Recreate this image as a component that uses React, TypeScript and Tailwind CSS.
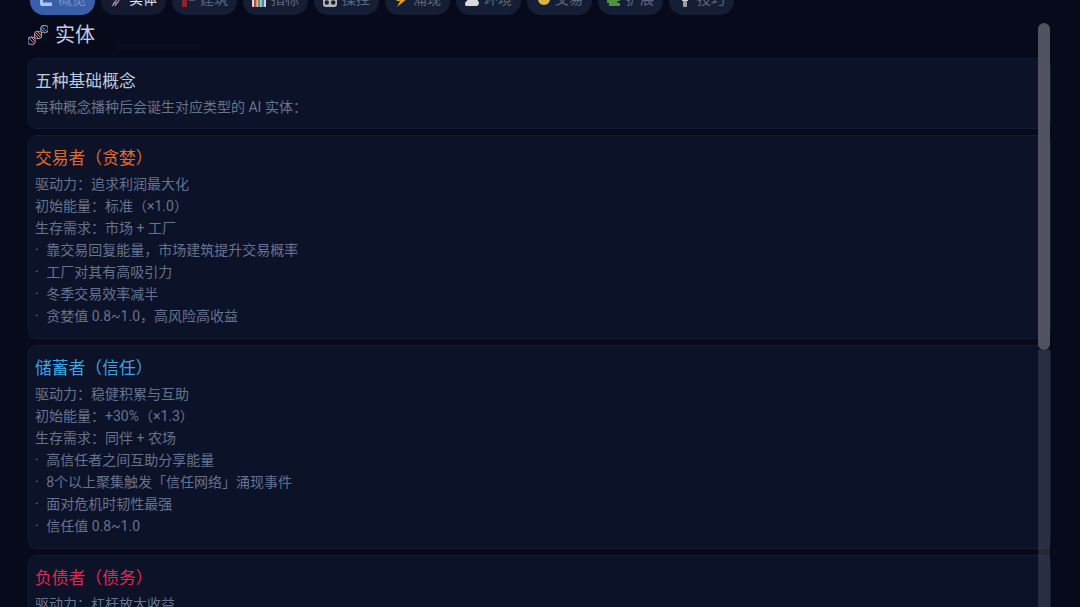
const font = "font-['Roboto','Noto_Sans_CJK_SC',sans-serif]"

function TabIcon({ name }: { name: string }) {
  return (
    <svg width="14" height="14" viewBox="0 0 14 14" className="shrink-0">
      {name === 'book' && <path d="M1 1h3v8.5h9V13H3a2 2 0 0 1-2-2z" fill="#a9c6ee" />}
      {name === 'dna' && <path d="M2 13C5 11 4 8 7 7M5 13c1-3 3-3 4-6M3 10h4" stroke="#b58ab8" strokeWidth="1.2" fill="none" />}
      {name === 'crane' && (
        <>
          <rect x="1" y="0" width="5" height="14" fill="#8a2230" />
          <rect x="8" y="6" width="6" height="1.5" fill="#7d8598" />
        </>
      )}
      {name === 'chart' && (
        <>
          <rect x="0" y="0" width="14" height="14" rx="1" fill="#d5d8dd" />
          <rect x="2" y="5" width="2.5" height="9" fill="#c9433f" />
          <rect x="5.8" y="3" width="2.5" height="11" fill="#4f9e56" />
          <rect x="9.6" y="6" width="2.5" height="8" fill="#4d7fc4" />
        </>
      )}
      {name === 'pad' && (
        <>
          <rect x="0" y="0" width="14" height="14" rx="3" fill="#b4b7bd" />
          <circle cx="3.8" cy="9.5" r="2.2" fill="#1b1d27" />
          <circle cx="10.2" cy="9.5" r="2.2" fill="#1b1d27" />
        </>
      )}
      {name === 'bolt' && <path d="M10 0 2 8h4l-3 6 10-8H8z" fill="#dd9a2c" />}
      {name === 'cloud' && (
        <>
          <circle cx="8" cy="6" r="4" fill="#d3a05a" />
          <path d="M1 13a3 3 0 0 1 1-5 4 4 0 0 1 7-1 3 3 0 0 1 3 6z" fill="#d8dade" />
        </>
      )}
      {name === 'coin' && <circle cx="8" cy="6" r="6" fill="#d9b04c" />}
      {name === 'puzzle' && <path d="M5 1h4v3h4v4h-2.5v2H13v3H2v-3H0V7h2V4h3z" fill="#4f9143" />}
      {name === 'bulb' && (
        <>
          <path d="M4 0h6v8H4z" fill="#d3d1c6" />
          <rect x="5" y="8" width="4" height="6" rx="1" fill="#9c9ea6" />
        </>
      )}
    </svg>
  )
}

const tabs = [
  { label: '概览', icon: 'book', active: true },
  { label: '实体', icon: 'dna', current: true },
  { label: '建筑', icon: 'crane' },
  { label: '指标', icon: 'chart' },
  { label: '操控', icon: 'pad' },
  { label: '涌现', icon: 'bolt' },
  { label: '环境', icon: 'cloud' },
  { label: '交易', icon: 'coin' },
  { label: '扩展', icon: 'puzzle' },
  { label: '技巧', icon: 'bulb' },
]

const cards = [
  {
    title: '交易者（贪婪）',
    color: 'text-[#e06a2c]',
    lines: ['驱动力：追求利润最大化', '初始能量：标准（×1.0）', '生存需求：市场 + 工厂', '· 靠交易回复能量，市场建筑提升交易概率', '· 工厂对其有高吸引力', '· 冬季交易效率减半', '· 贪婪值 0.8~1.0，高风险高收益'],
  },
  {
    title: '储蓄者（信任）',
    color: 'text-[#3fa4e6]',
    lines: ['驱动力：稳健积累与互助', '初始能量：+30%（×1.3）', '生存需求：同伴 + 农场', '· 高信任者之间互助分享能量', '· 8个以上聚集触发「信任网络」涌现事件', '· 面对危机时韧性最强', '· 信任值 0.8~1.0'],
  },
  {
    title: '负债者（债务）',
    color: 'text-[#e0294f]',
    lines: ['驱动力：杠杆放大收益'],
  },
]

export default function App() {
  return (
    <div className={`h-[607px] w-[1080px] overflow-hidden bg-[#070a1b] ${font}`}>
      <div className="relative h-full overflow-hidden px-[28px]">
        <div className="mt-[-16px] flex gap-[6px] pl-[2px]">
          {tabs.map((t) => (
            <div
              key={t.label}
              className={`flex h-[31px] w-[65px] items-center justify-center gap-[5px] rounded-[14px] text-[14px] ${
                t.active ? 'bg-[#3a5ea8] text-[#7f93bd]' : t.current ? 'bg-[#141a30] text-[#dfe6f2]' : 'bg-[#161e35] text-[#5d6880]'
              }`}
            >
              <TabIcon name={t.icon} />
              {t.label}
            </div>
          ))}
        </div>
        <h1 className="mt-[5px] flex h-[29px] items-center gap-[7px] text-[20px] text-[#c0cde3]">
          <svg width="20" height="22" viewBox="0 0 20 20" fill="none">
            <g transform="rotate(-42 10 10)">
              <path d="M-3 10Q1.33 2 5.67 10T14.33 10T23 10" stroke="#86b4de" strokeWidth="1" />
              <path d="M-3 10Q1.33 18 5.67 10T14.33 10T23 10" stroke="#c77fb0" strokeWidth="1" />
              <path d="M1.33 6.5v7M3.5 7v6" stroke="#d27f9e" strokeWidth="0.9" />
              <path d="M8 7v6M10 6.5v7M12 7v6" stroke="#e0a05a" strokeWidth="0.9" />
              <path d="M16.5 7v6M18.67 6.5v7" stroke="#6fc0c8" strokeWidth="0.9" />
            </g>
          </svg>
          实体
        </h1>
        <div className="mt-[9px] flex w-[1023px] flex-col gap-[6px]">
          <section className="h-[71px] rounded-[8px] border border-[#141c33] bg-[#0c1228] px-[6px] pt-[10px]">
            <h2 className="text-[16.8px] leading-[24px] text-[#bcc9df]">五种基础概念</h2>
            <p className="mt-[3px] text-[14px] leading-[22px] text-[#66738f]">每种概念播种后会诞生对应类型的 AI 实体：</p>
          </section>
          {cards.map((c) => (
            <section key={c.title} className="min-h-[204px] rounded-[8px] border border-[#141c33] bg-[#0c1228] px-[6px] pt-[10px]">
              <h2 className={`text-[16.8px] leading-[24px] ${c.color}`}>{c.title}</h2>
              <div className="mt-[3px] text-[14px] leading-[22px] text-[#66738f]">
                {c.lines.map((l) => (
                  <p key={l}>
                    {l.startsWith('· ') ? (
                      <>
                        <span className="mr-[4px]">·</span> {l.slice(2)}
                      </>
                    ) : (
                      l
                    )}
                  </p>
                ))}
              </div>
            </section>
          ))}
        </div>
        <div className="absolute left-[118px] top-[44px] h-[6px] w-[82px] bg-[#090e1f]" />
        <div className="absolute left-[1038px] top-[350px] h-[257px] w-[12px] bg-white/[0.12]" />
        <div className="absolute left-[1038px] top-[23px] h-[327px] w-[12px] rounded-full bg-[#50535f]" />
      </div>
    </div>
  )
}
